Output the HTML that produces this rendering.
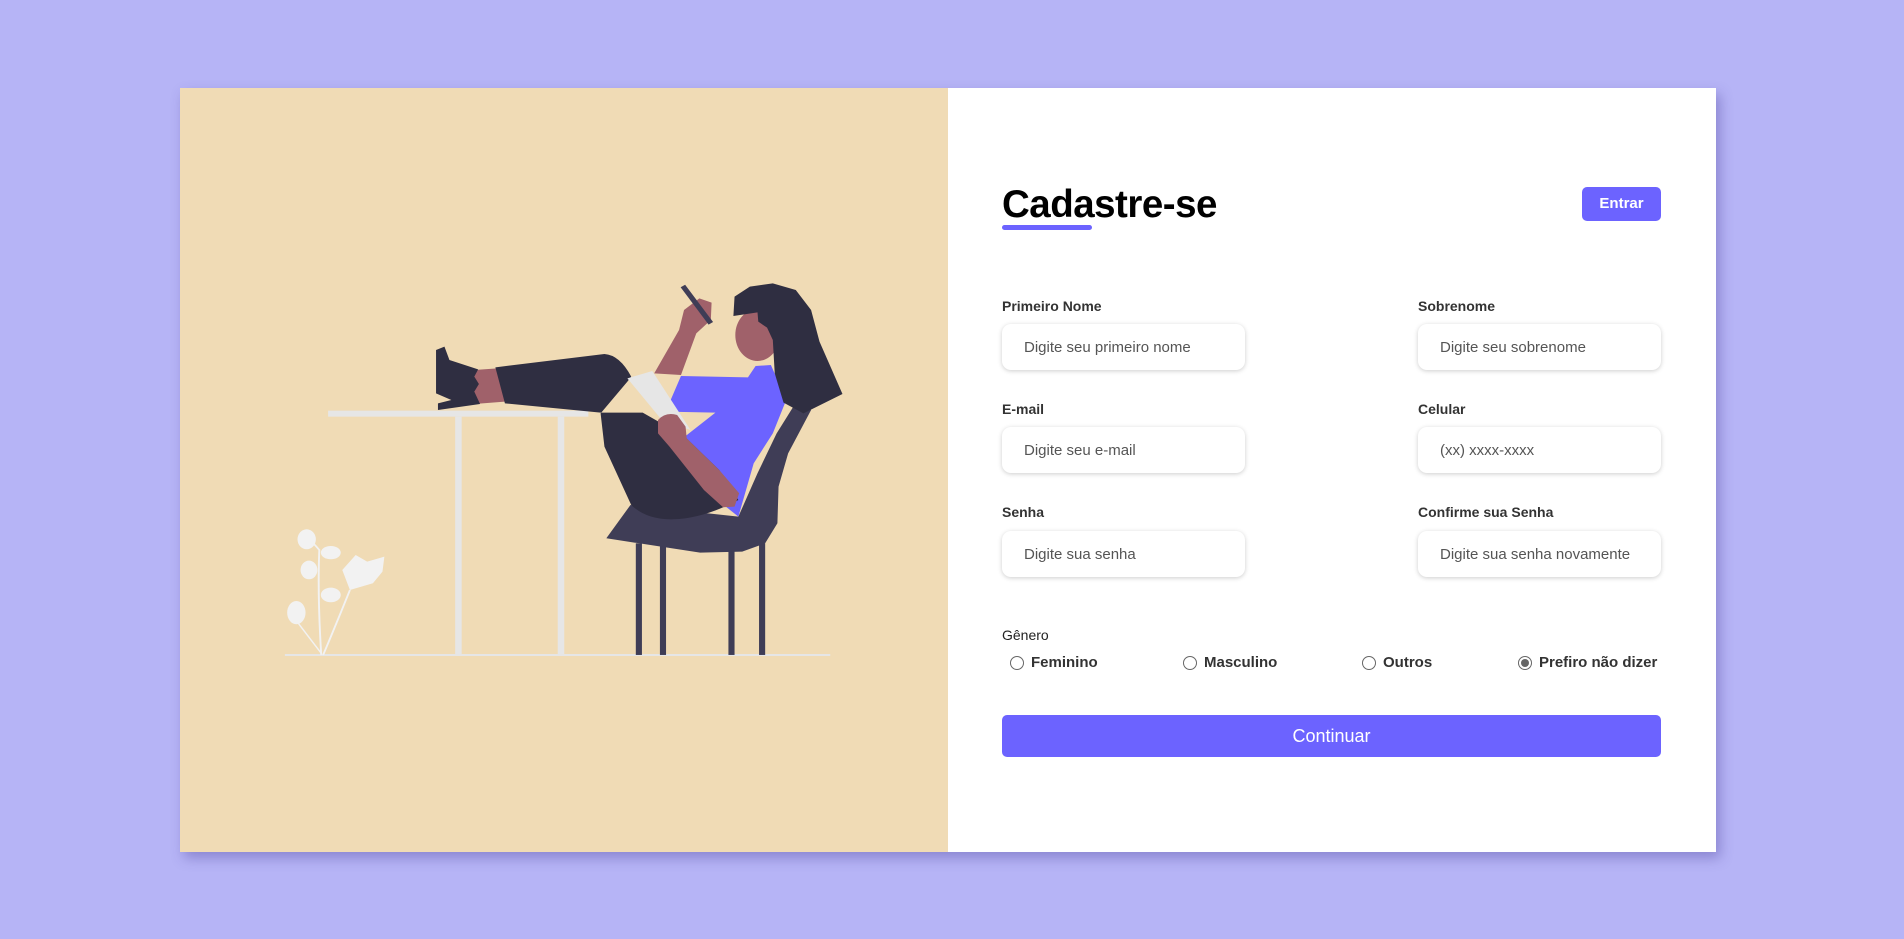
<!DOCTYPE html>
<html><head><meta charset="utf-8"><style>
*{box-sizing:border-box;margin:0;padding:0}
body{width:1904px;height:939px;background:#b6b4f6;font-family:"Liberation Sans",sans-serif;position:relative;overflow:hidden}
.card{position:absolute;left:180px;top:88px;width:1536px;height:764px;background:#fff;box-shadow:4px 6px 12px rgba(60,50,140,.35)}
.left{position:absolute;left:0;top:0;width:768px;height:764px;background:#f0dbb5}
.a{position:absolute}
h1{position:absolute;left:1002px;top:183px;font-size:38.5px;font-weight:700;color:#000;letter-spacing:-.5px}
.ul{position:absolute;left:1002px;top:225px;width:90px;height:5px;border-radius:3px;background:#6c63ff}
.btn{position:absolute;background:#6c63ff;color:#fff;border-radius:5px;text-align:center;font-weight:700}
.lab{position:absolute;font-size:14px;font-weight:700;color:#333}
.inp{position:absolute;width:243px;height:46px;border-radius:9px;background:#fff;box-shadow:0 1px 5px rgba(0,0,0,.2);padding-left:22px;line-height:48px;font-size:15px;color:#555}
.r{position:absolute;top:654px;font-size:15px;font-weight:700;color:#333;display:flex;align-items:center}
.r i{display:inline-block;width:14px;height:14px;border:1px solid #666;border-radius:50%;margin-right:7px;position:relative}
.r i.on::after{content:"";position:absolute;left:2px;top:2px;width:8px;height:8px;border-radius:50%;background:#666}
</style></head><body>
<div class="card"><div class="left"></div></div>
<svg class="a" style="left:0;top:0" width="1904" height="939">
<g transform="translate(260,260) scale(0.3827,0.3333)">
<line x1="65" y1="1185" x2="1490" y2="1185" stroke="#e6e6e6" stroke-width="6"/>
<rect x="178" y="452" width="680" height="18" fill="#e6e6e6"/>
<rect x="510" y="470" width="17" height="715" fill="#e6e6e6"/>
<rect x="778" y="470" width="17" height="715" fill="#e6e6e6"/>
<g fill="#3f3d56"><rect x="982" y="850" width="16" height="335"/><rect x="1045" y="850" width="16" height="335"/><rect x="1224" y="860" width="16" height="325"/><rect x="1304" y="850" width="16" height="335"/></g>
<path d="M905 835 L968 735 L1250 770 L1300 640 L1350 520 L1410 410 L1440 450 L1380 580 L1355 680 L1352 790 L1320 850 L1260 875 L1150 878 Z" fill="#3f3d56"/>
<path d="M1100 348 L1275 352 L1295 318 L1335 315 L1375 420 L1340 520 L1290 610 L1250 770 L1130 660 L1110 530 L1190 458 L1060 455 Z" fill="#6c63ff"/>
<path d="M1030 340 L1095 210 L1108 150 L1148 115 L1180 128 L1178 180 L1140 220 L1100 345 Z" fill="#a0616a"/>
<line x1="1105" y1="78" x2="1178" y2="190" stroke="#3f3d56" stroke-width="14"/>
<ellipse cx="1300" cy="225" rx="58" ry="78" fill="#a0616a"/>
<path d="M1237 168 L1240 110 L1280 80 L1340 70 L1400 90 L1440 150 L1462 245 L1522 402 L1420 460 L1368 428 L1345 340 L1340 240 L1325 203 L1302 185 L1300 157 Z" fill="#2f2e41"/>
<path d="M560 330 L620 325 L640 425 L560 432 Z" fill="#a0616a"/>
<path d="M615 322 L900 282 Q940 285 970 350 L960 365 L890 460 L900 560 L970 735 Q1010 780 1080 778 Q1160 775 1250 720 L1200 630 L1110 530 L1000 458 L890 458 L640 430 Z" fill="#2f2e41"/>
<path d="M460 270 L482 260 L495 300 L570 328 L560 350 L572 372 L560 395 L575 432 L465 450 L465 430 L500 420 L460 400 Z" fill="#2f2e41"/>
<path d="M960 355 L1025 333 L1125 510 L1050 480 Z" fill="#e6e6e6"/>
<path d="M1040 480 Q1060 455 1090 465 L1112 500 L1115 535 L1200 630 L1252 700 L1240 740 L1210 742 L1160 690 L1070 560 L1040 520 Z" fill="#a0616a"/>
<g fill="#f2f2f2"><path d="M160 1185 Q150 1000 155 870 Q140 850 130 840" stroke="#f2f2f2" stroke-width="5" fill="none"/><path d="M165 1185 Q200 1090 235 990" stroke="#f2f2f2" stroke-width="5" fill="none"/><path d="M160 1180 L100 1090" stroke="#f2f2f2" stroke-width="4" fill="none"/>
<ellipse cx="122" cy="838" rx="24" ry="30"/><ellipse cx="185" cy="878" rx="26" ry="20"/><ellipse cx="128" cy="930" rx="22" ry="28"/><ellipse cx="185" cy="1005" rx="26" ry="22"/><ellipse cx="95" cy="1058" rx="24" ry="35"/><path d="M235 990 L215 930 L250 885 L280 905 L325 890 L320 935 L295 970 Z"/></g>
</g></svg>
<h1>Cadastre-se</h1><div class="ul"></div>
<div class="btn" style="left:1582px;top:187px;width:79px;height:34px;line-height:34px;font-size:15px">Entrar</div>
<div class="lab" style="left:1002px;top:298px">Primeiro Nome</div>
<div class="lab" style="left:1418px;top:298px">Sobrenome</div>
<div class="inp" style="left:1002px;top:324px">Digite seu primeiro nome</div>
<div class="inp" style="left:1418px;top:324px">Digite seu sobrenome</div>
<div class="lab" style="left:1002px;top:401px">E-mail</div>
<div class="lab" style="left:1418px;top:401px">Celular</div>
<div class="inp" style="left:1002px;top:427px">Digite seu e-mail</div>
<div class="inp" style="left:1418px;top:427px">(xx) xxxx-xxxx</div>
<div class="lab" style="left:1002px;top:504px">Senha</div>
<div class="lab" style="left:1418px;top:504px">Confirme sua Senha</div>
<div class="inp" style="left:1002px;top:531px">Digite sua senha</div>
<div class="inp" style="left:1418px;top:531px">Digite sua senha novamente</div>
<div class="lab" style="left:1002px;top:627px;font-weight:400;color:#222">Gênero</div>
<div class="r" style="left:1010px"><i></i>Feminino</div>
<div class="r" style="left:1183px"><i></i>Masculino</div>
<div class="r" style="left:1362px"><i></i>Outros</div>
<div class="r" style="left:1518px"><i class="on"></i>Prefiro não dizer</div>
<div class="btn" style="left:1002px;top:715px;width:659px;height:42px;line-height:43px;font-size:18px;font-weight:400">Continuar</div>
</body></html>
